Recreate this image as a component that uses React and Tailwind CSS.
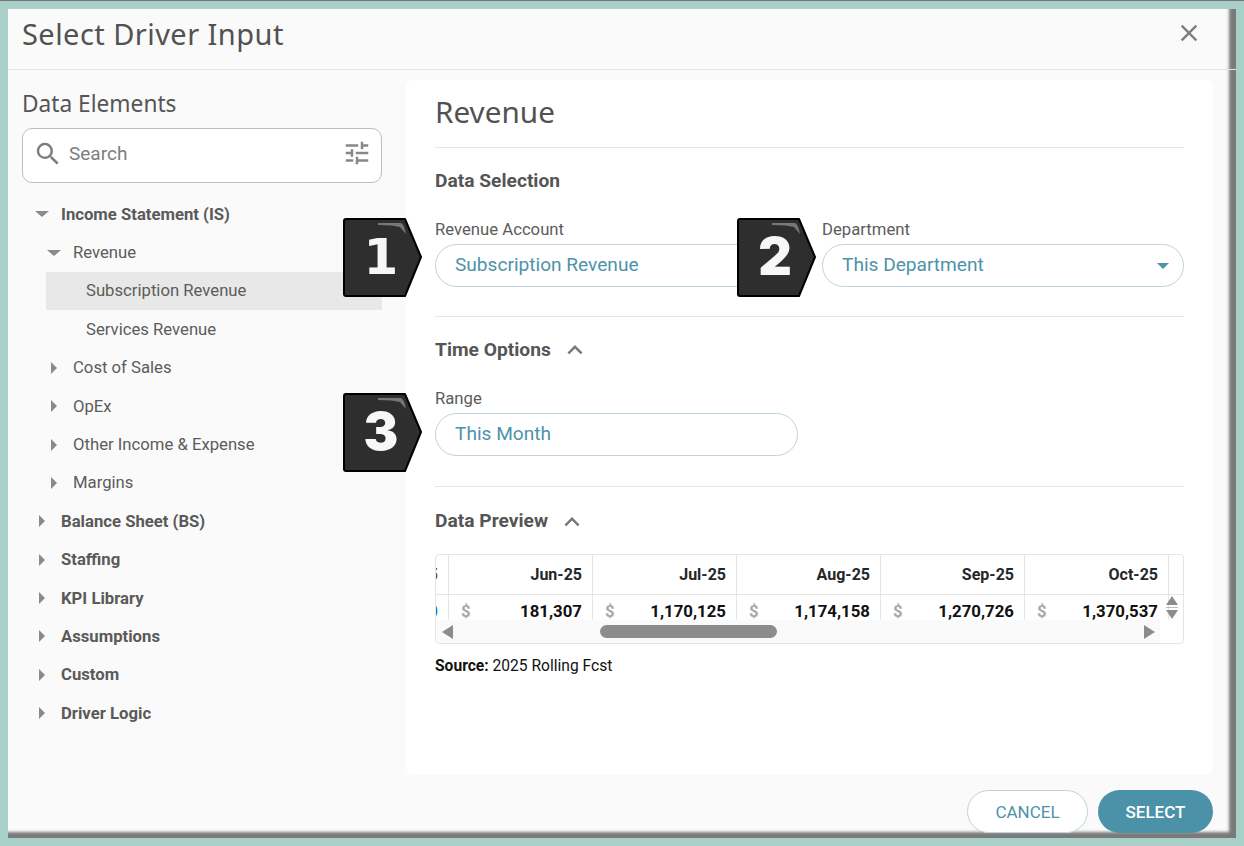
import React from "react";
import { MdClose, MdExpandLess, MdSearch, MdTune } from "react-icons/md";

const months = [
  ["Jun-25", "181,307"],
  ["Jul-25", "1,170,125"],
  ["Aug-25", "1,174,158"],
  ["Sep-25", "1,270,726"],
  ["Oct-25", "1,370,537"],
];

const tree = [
  { label: "Income Statement (IS)", level: 0, open: true },
  { label: "Revenue", level: 1, open: true },
  { label: "Subscription Revenue", level: 2, active: true },
  { label: "Services Revenue", level: 2 },
  { label: "Cost of Sales", level: 1 },
  { label: "OpEx", level: 1 },
  { label: "Other Income & Expense", level: 1 },
  { label: "Margins", level: 1 },
  { label: "Balance Sheet (BS)", level: 0 },
  { label: "Staffing", level: 0 },
  { label: "KPI Library", level: 0 },
  { label: "Assumptions", level: 0 },
  { label: "Custom", level: 0 },
  { label: "Driver Logic", level: 0 },
];

const Caret = ({ open }) => (
  <svg width="14" height="14" viewBox="0 0 14 14" className="shrink-0 text-[#8a8a8a]">
    {open ? (
      <polygon points="0,4 14,4 7,10" fill="currentColor" />
    ) : (
      <polygon points="4,1 10,7 4,13" fill="currentColor" />
    )}
  </svg>
);

const TreeRow = ({ item }) => {
  if (item.level === 2) {
    return (
      <div
        className={`ml-6 flex h-[38.4px] items-center pl-10 text-[16.7px] text-[#5c5c5c] ${
          item.active ? "bg-[#e8e8e8]" : ""
        }`}
      >
        {item.label}
      </div>
    );
  }
  return (
    <div className={`flex h-[38.4px] items-center ${item.level === 1 ? "pl-[25px]" : "pl-[13px]"}`}>
      <Caret open={item.open} />
      <span
        className={`ml-[12px] text-[16.7px] ${
          item.level === 0 ? "font-bold text-[#5a5a5a]" : "text-[#5c5c5c]"
        }`}
      >
        {item.label}
      </span>
    </div>
  );
};

const Badge = ({ n, className, digitClass }) => (
  <div className={`absolute z-10 h-[80px] w-[80px] ${className}`}>
    <svg viewBox="0 0 80 80" className="absolute inset-0 h-full w-full">
      <path
        d="M3 1 H62 L78 39 L62 78 H3 Q1 78 1 76 V3 Q1 1 3 1 Z"
        fill="#2e2e2e"
        stroke="#000"
        strokeWidth="2"
        strokeLinejoin="round"
      />
      <path d="M35 5 H58 Q61 6 63 16 L57 9 Q50 7 35 7 Z" fill="#777" />
    </svg>
    <span
      className={`absolute left-[10px] top-[11px] w-[56px] text-center leading-[56px] text-[#f7f7f7] ${digitClass}`}
    >
      {n}
    </span>
  </div>
);

const Pill = ({ children, arrow, className = "" }) => (
  <div
    className={`flex h-[43px] items-center justify-between rounded-full border border-[#bdd3de] bg-white pl-[19px] pr-[14px] text-[19.1px] text-[#4d93a9] ${className}`}
  >
    {children}
    {arrow && (
      <svg width="12" height="6" viewBox="0 0 12 6">
        <polygon points="0,0 12,0 6,6" fill="#4d93a9" />
      </svg>
    )}
  </div>
);

const SectionHead = ({ title, chevron, className = "" }) => (
  <div className={`flex items-center pt-[2px] text-[19.2px] font-bold text-[#555] ${className}`}>
    {title}
    {chevron && <MdExpandLess className="ml-[9px] text-[#777]" size={30} />}
  </div>
);

const FieldLabel = ({ children }) => (
  <div className="mb-[2px] pt-px text-[16.7px] leading-[24px] text-[#5c5c5c]">{children}</div>
);

export default function App() {
  return (
    <div className="h-[846px] w-[1244px] overflow-hidden border-t border-t-[#777] bg-[#a9d0c8] pl-2 pt-2 font-['Roboto',sans-serif]">
      <div className="flex h-[829px] w-[1228px] flex-col bg-[#fafafa] shadow-[inset_-7px_-6px_3px_#7a7a7a]">
        <header className="flex h-[61px] shrink-0 items-center justify-between border-b border-[#e5e5e5] pl-[14px] pr-[33px]">
          <h1 className="pb-[10px] font-['Noto_Sans',sans-serif] text-[29px] tracking-[0.45px] text-[#525252]">
            Select Driver Input
          </h1>
          <MdClose className="mb-[12px] text-[#7d7d7d]" size={28} />
        </header>

        <div className="flex">
          <aside className="w-[398px] shrink-0 pl-[14px] pr-[24px]">
            <h2 className="mt-[19px] font-['Noto_Sans',sans-serif] text-[22.7px] leading-[30px] text-[#555]">
              Data Elements
            </h2>
            <div className="mt-[9px] flex h-[55px] items-center rounded-[10px] border border-[#bdbdbd] bg-white pb-[3px] pl-[10px] pr-[9px]">
              <MdSearch className="text-[#7d7d7d]" size={30} />
              <span className="ml-[6px] flex-1 text-[19px] text-[#7d7d7d]">Search</span>
              <MdTune className="mb-[3px] text-[#888]" size={30} />
            </div>
            <div className="mt-[12px]">
              {tree.map((item) => (
                <TreeRow key={item.label} item={item} />
              ))}
            </div>
          </aside>

          <main className="mt-[10px] h-[695px] w-[807px] rounded-lg bg-white pl-[29px] pr-[29px]">
            <div className="flex h-[68px] items-center border-b border-[#e5e5e5] pb-[3px] font-['Noto_Sans',sans-serif] text-[29.7px] text-[#525252]">
              Revenue
            </div>

            <div className="h-[169px] border-b border-[#e5e5e5]">
              <SectionHead title="Data Selection" className="h-[64px]" />
              <div className="mt-[5px] flex gap-[24px]">
                <div className="relative w-[363px]">
                  <Badge
                    n="1"
                    className="left-[-92px] top-px"
                    digitClass="font-['DejaVu_Sans',sans-serif] text-[50px] font-bold"
                  />
                  <FieldLabel>Revenue Account</FieldLabel>
                  <Pill>Subscription Revenue</Pill>
                </div>
                <div className="relative w-[362px]">
                  <Badge
                    n="2"
                    className="left-[-85px] top-px"
                    digitClass="font-['Inter',sans-serif] text-[52px] font-black"
                  />
                  <FieldLabel>Department</FieldLabel>
                  <Pill arrow>This Department</Pill>
                </div>
              </div>
            </div>

            <div className="h-[170px] border-b border-[#e5e5e5]">
              <SectionHead title="Time Options" chevron className="h-[64px]" />
              <div className="relative mt-[5px] w-[363px]">
                <Badge
                  n="3"
                  className="left-[-92px] top-[7px]"
                  digitClass="font-['Inter',sans-serif] text-[52px] font-black"
                />
                <FieldLabel>Range</FieldLabel>
                <Pill>This Month</Pill>
              </div>
            </div>

            <SectionHead title="Data Preview" chevron className="h-[67px]" />

            <div className="h-[90px] w-[749px] overflow-hidden rounded border border-[#e5e5e5]">
              <div className="flex h-[40px] border-b border-[#e5e5e5] text-base font-bold text-[#262626]">
                <div className="flex w-[13px] shrink-0 items-center justify-end overflow-hidden border-r border-[#e5e5e5] pr-[10px]">
                  <span className="shrink-0 text-[#555]">5</span>
                </div>
                {months.map(([m]) => (
                  <div
                    key={m}
                    className="flex w-[144px] shrink-0 items-center justify-end border-r border-[#e5e5e5] pr-[10px]"
                  >
                    {m}
                  </div>
                ))}
              </div>
              <div className="flex h-[25px] overflow-hidden text-[16.8px] leading-[25px] font-bold text-[#111]">
                <div className="flex w-[13px] shrink-0 items-start justify-end overflow-hidden border-r border-[#e5e5e5] pr-[10px] pt-1">
                  <span className="shrink-0 text-[#1677c8]">0</span>
                </div>
                {months.map(([m, v]) => (
                  <div
                    key={m}
                    className="flex w-[144px] shrink-0 items-start justify-between border-r border-[#e5e5e5] pl-[12px] pr-[10px] pt-1"
                  >
                    <span className="text-[#a8a8a8]">$</span>
                    {v}
                  </div>
                ))}
                <div className="flex flex-1 items-center justify-start">
                  <svg width="14" height="25" viewBox="0 0 14 25" className="-ml-1 shrink-0">
                    <polygon points="7,1 13,10 1,10" fill="#8c8c8c" />
                    <rect x="1" y="12" width="12" height="1" fill="#bbb" />
                    <polygon points="1,15 13,15 7,24" fill="#8c8c8c" />
                  </svg>
                </div>
              </div>
              <div className="flex h-[23px] w-[724px] items-center bg-[#fafafa] pl-[6px] pr-[5px]">
                <svg width="11" height="14" viewBox="0 0 11 14">
                  <polygon points="11,0 11,14 0,7" fill="#8c8c8c" />
                </svg>
                <div className="ml-[147px] h-[13px] w-[177px] rounded-full bg-[#8c8c8c]" />
                <svg width="11" height="14" viewBox="0 0 11 14" className="ml-auto">
                  <polygon points="0,0 11,7 0,14" fill="#8c8c8c" />
                </svg>
              </div>
            </div>

            <p className="mt-[11px] text-[15.6px] text-[#111]">
              <span className="font-bold">Source:</span> 2025 Rolling Fcst
            </p>
          </main>
        </div>

        <footer className="mt-[15px] flex justify-end gap-[10px] pr-[23px]">
          <button className="h-[43px] w-[121px] rounded-full border border-[#bdd3de] bg-white pt-[2px] text-[17px] text-[#4d93a9]">
            CANCEL
          </button>
          <button className="h-[43px] w-[115px] rounded-full bg-[#4b92a9] pt-[2px] text-[17px] font-medium text-white">
            SELECT
          </button>
        </footer>
      </div>
    </div>
  );
}
